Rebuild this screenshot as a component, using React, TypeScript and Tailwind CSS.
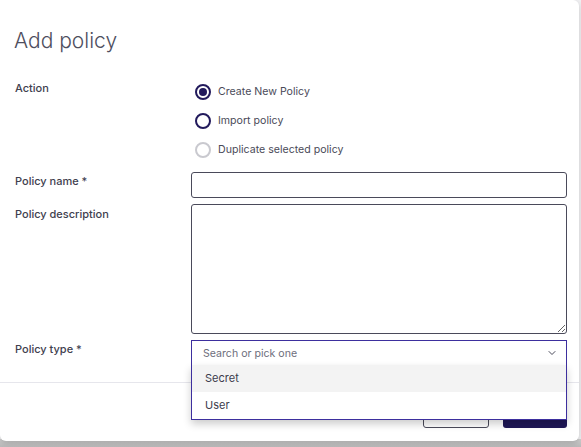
import React from "react";
import { ChevronDown } from "lucide-react";

function Radio({ state, label }: { state: "on" | "off" | "disabled"; label: string }) {
  const border =
    state === "disabled" ? "border-[#c9c9cf]" : "border-[#221a5c]";
  return (
    <div className="flex h-[29px] items-center gap-[7px]">
      <span
        className={`flex h-[16px] w-[16px] items-center justify-center rounded-full border-2 ${border} bg-white`}
      >
        {state === "on" && <span className="h-[8px] w-[8px] rounded-full bg-[#221a5c]" />}
      </span>
      <span className="text-[10.6px] text-[#4a4a58]">{label}</span>
    </div>
  );
}

export default function App() {
  return (
    <div
      className="relative h-[447px] w-[581px] overflow-hidden bg-[#f1f1f3]"
      style={{ fontFamily: "Inter, 'Noto Sans', sans-serif" }}
    >
      <div className="absolute bottom-0 left-0 right-0 h-[8px] bg-gradient-to-b from-[#d0d0d0] to-[#b9b9b9]" />
      <div className="relative h-[441px] w-[579px] rounded-b-[6px] rounded-tr-[6px] bg-white shadow-[0_2px_6px_rgba(0,0,0,0.18)]">
        <div className="pl-[14px] pt-[27px]">
          <h1 className="text-[21px] font-light leading-[28px] text-[#4e4e5e]">Add policy</h1>
        </div>

        <div className="mt-[22px] flex flex-col">
          {/* Action */}
          <div className="flex">
            <div className="w-[191px] pl-[15px] pt-[3px] text-[11px] font-medium leading-[16px] text-[#40404e]">
              Action
            </div>
            <div className="flex flex-col pl-[4px]">
              <Radio state="on" label="Create New Policy" />
              <Radio state="off" label="Import policy" />
              <Radio state="disabled" label="Duplicate selected policy" />
            </div>
          </div>

          {/* Policy name */}
          <div className="mt-[8px] flex">
            <div className="w-[191px] pl-[15px] pt-[1px] text-[11px] font-medium leading-[16px] text-[#40404e]">
              Policy name *
            </div>
            <input className="h-[26px] w-[376px] rounded-[3px] border border-[#4a4a5a] bg-white px-2 text-[11px] outline-none" />
          </div>

          {/* Description */}
          <div className="mt-[6px] flex">
            <div className="w-[191px] pl-[15px] pt-[2px] text-[11px] font-medium leading-[16px] text-[#40404e]">
              Policy description
            </div>
            <textarea className="h-[130px] w-[376px] rounded-[3px] border border-[#4a4a5a] bg-white px-2 text-[11px] outline-none" />
          </div>

          {/* Policy type */}
          <div className="mt-[6px] flex">
            <div className="w-[191px] pl-[15px] pt-[1px] text-[11px] font-medium leading-[16px] text-[#40404e]">
              Policy type *
            </div>
            <div className="relative w-[376px]">
              <div className="flex h-[25px] items-center justify-between border border-b-0 border-[#3d2f9e] bg-white pl-[11px] pr-[8px]">
                <span className="pt-[1px] text-[10.6px] text-[#6e6e7c]">Search or pick one</span>
                <ChevronDown size={12} strokeWidth={2} className="text-[#4a4a5a]" />
              </div>
              <div className="absolute left-0 right-0 top-[25px] z-10 border border-t-0 border-[#3d2f9e] bg-white shadow-[0_4px_8px_rgba(0,0,0,0.2)]">
                <div className="flex h-[27px] items-center bg-[#f3f3f3] pl-[13px] text-[11px] text-[#3c3c4c]">
                  Secret
                </div>
                <div className="flex h-[27px] items-center pl-[13px] text-[11px] text-[#3c3c4c]">
                  User
                </div>
              </div>
            </div>
          </div>
        </div>

        {/* Footer */}
        <div className="mt-[17px] border-t border-[#e6e6ec]">
          <div className="flex justify-end gap-[14px] pr-[12px] pt-[16px]">
            <button className="h-[29px] w-[66px] rounded-[3px] border border-[#4a4a5a] bg-white text-[11px] text-[#3c3c4c]">
              Cancel
            </button>
            <button className="h-[29px] w-[64px] rounded-[3px] bg-[#1e1656] text-[11px] text-white">
              Save
            </button>
          </div>
        </div>
      </div>
    </div>
  );
}
